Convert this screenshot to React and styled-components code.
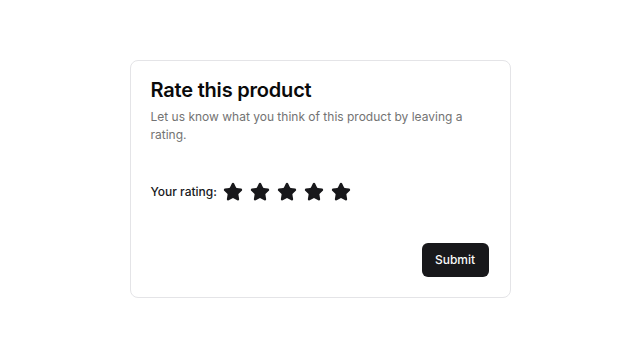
import React from "react";
import styled, { createGlobalStyle } from "styled-components";
import { Star } from "lucide-react";

const Global = createGlobalStyle`
  html, body { margin: 0; padding: 0; background: #ffffff; }
  body { font-family: Inter, "Noto Sans", sans-serif; -webkit-font-smoothing: antialiased; }
`;

const Page = styled.div`
  width: 640px;
  height: 357px;
  display: flex;
  align-items: center;
  justify-content: center;
`;

const Card = styled.div`
  box-sizing: border-box;
  width: 381px;
  height: 238px;
  border: 1px solid #e4e4e7;
  border-radius: 8px;
  background: #fff;
  padding: 14px 21px 20px 20px;
  display: flex;
  flex-direction: column;
`;

const Title = styled.h2`
  margin: 0;
  font-size: 20px;
  line-height: 30px;
  font-weight: 600;
  color: #0a0a0a;
  letter-spacing: -0.2px;
`;

const Desc = styled.p`
  margin: 3px 0 0 0;
  font-size: 12px;
  line-height: 18px;
  color: #737373;
  max-width: 320px;
`;

const RatingRow = styled.div`
  margin-top: 38px;
  display: flex;
  align-items: center;
  gap: 6px;
`;

const Label = styled.span`
  font-size: 12px;
  font-weight: 500;
  color: #18181b;
`;

const Stars = styled.div`
  display: flex;
  align-items: center;
  gap: 7px;
`;

const Footer = styled.div`
  margin-top: auto;
  display: flex;
  justify-content: flex-end;
`;

const Button = styled.button`
  height: 34px;
  width: 67px;
  padding: 0;
  border: none;
  border-radius: 6px;
  background: #18181b;
  color: #fafafa;
  font-family: Inter, sans-serif;
  font-size: 12px;
  font-weight: 500;
`;

export default function App() {
  return (
    <>
      <Global />
      <Page>
        <Card>
          <Title>Rate this product</Title>
          <Desc>Let us know what you think of this product by leaving a rating.</Desc>
          <RatingRow>
            <Label>Your rating:</Label>
            <Stars>
              {[0, 1, 2, 3, 4].map((i) => (
                <Star key={i} size={20} fill="#18181b" color="#18181b" strokeWidth={2} />
              ))}
            </Stars>
          </RatingRow>
          <Footer>
            <Button>Submit</Button>
          </Footer>
        </Card>
      </Page>
    </>
  );
}
